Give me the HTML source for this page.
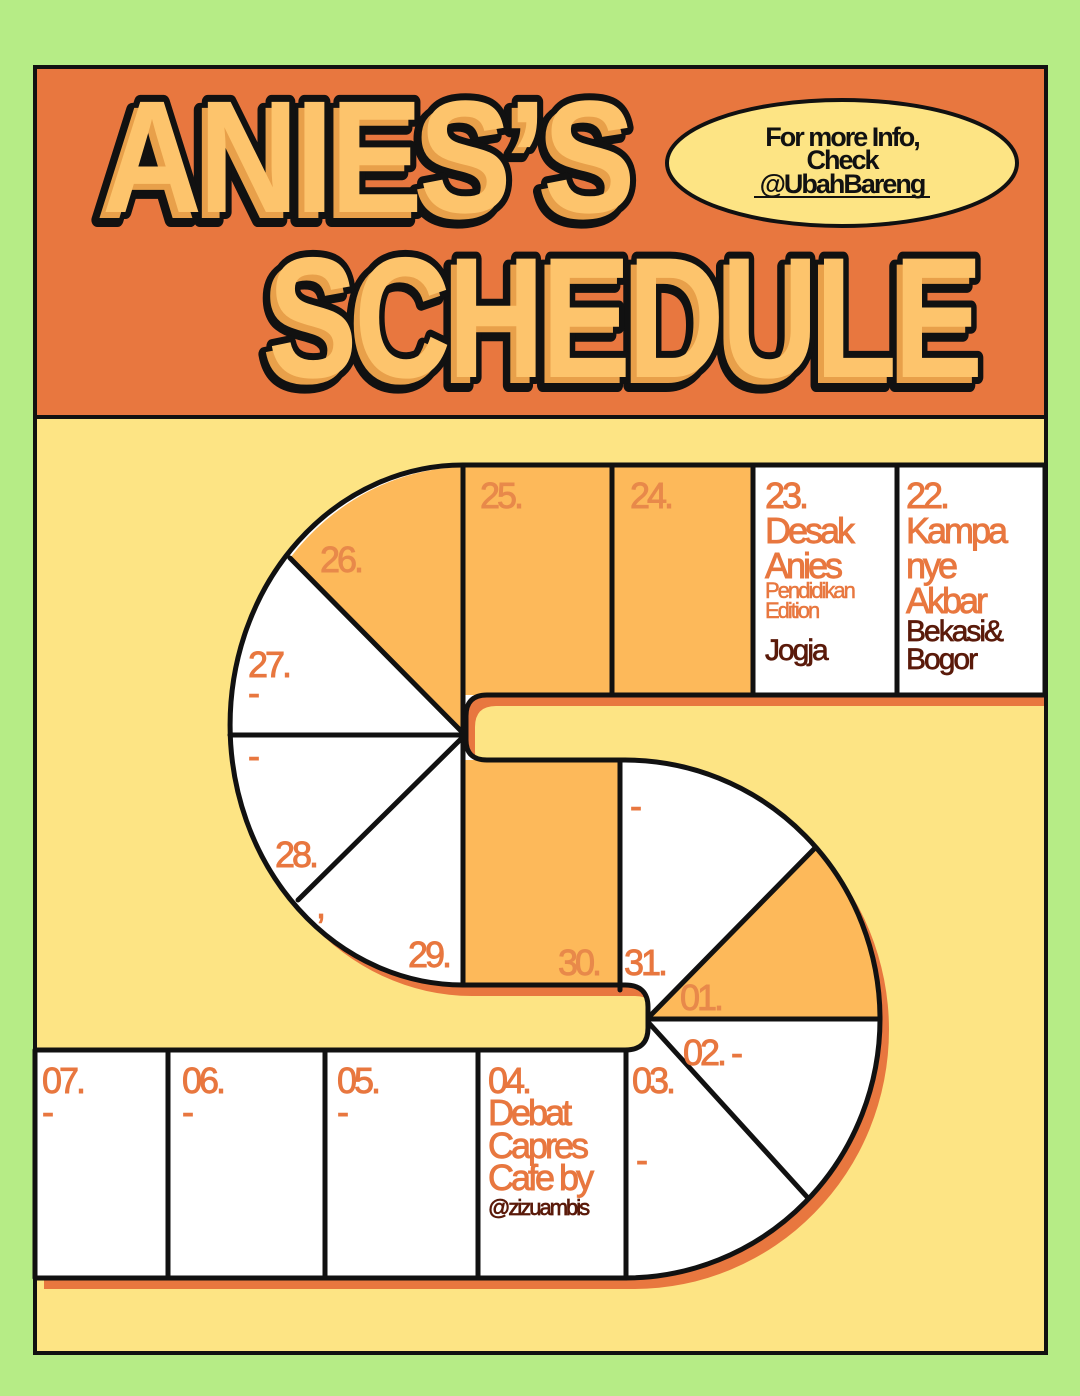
<!DOCTYPE html>
<html><head><meta charset="utf-8"><style>
html,body{margin:0;padding:0;background:#b6ec86;}
svg{display:block}
text{font-family:"Liberation Sans",sans-serif;}
</style></head><body>
<svg width="1080" height="1396" viewBox="0 0 1080 1396" xmlns="http://www.w3.org/2000/svg">
<defs>
<clipPath id="fr"><rect x="37" y="419" width="1007" height="932"/></clipPath>
<path id="S" d="M1045,465 L463,465 A233,260 0 0 0 463,985 L625,985 Q648,985 648,1007 L648,1028 Q648,1050 625,1050 L35,1050 L35,1278 L625,1278 A255,259 0 0 0 625,760 L487,760 Q466,760 466,740 L466,716 Q466,695 487,695 L1045,695 Z"/>
</defs>
<rect x="0" y="0" width="1080" height="1396" fill="#b6ec86"/>
<rect x="35" y="67" width="1011" height="1286" fill="#fde484" stroke="#111" stroke-width="4"/>
<rect x="37" y="69" width="1007" height="347" fill="#e8773f"/>
<line x1="35" y1="417" x2="1046" y2="417" stroke="#111" stroke-width="4"/>

<!-- Title -->
<g font-weight="bold" font-size="160" letter-spacing="-4">
<text x="102" y="212" textLength="530" lengthAdjust="spacingAndGlyphs" fill="#111" stroke="#111" stroke-width="14" stroke-linejoin="round" transform="translate(-8,8)">ANIES’S</text>
<text x="102" y="212" textLength="530" lengthAdjust="spacingAndGlyphs" fill="#111" stroke="#111" stroke-width="14" stroke-linejoin="round">ANIES’S</text>
<text x="102" y="212" textLength="530" lengthAdjust="spacingAndGlyphs" fill="#e8a04a" transform="translate(-6,6)">ANIES’S</text>
<text x="102" y="212" textLength="530" lengthAdjust="spacingAndGlyphs" fill="#fdc46c">ANIES’S</text>
</g>
<g font-weight="bold" font-size="172" letter-spacing="-4">
<text x="268" y="377" textLength="712" lengthAdjust="spacingAndGlyphs" fill="#111" stroke="#111" stroke-width="14" stroke-linejoin="round" transform="translate(-8,8)">SCHEDULE</text>
<text x="268" y="377" textLength="712" lengthAdjust="spacingAndGlyphs" fill="#111" stroke="#111" stroke-width="14" stroke-linejoin="round">SCHEDULE</text>
<text x="268" y="377" textLength="712" lengthAdjust="spacingAndGlyphs" fill="#e8a04a" transform="translate(-6,6)">SCHEDULE</text>
<text x="268" y="377" textLength="712" lengthAdjust="spacingAndGlyphs" fill="#fdc46c">SCHEDULE</text>
</g>

<ellipse cx="842" cy="163" rx="175" ry="63" fill="#fde484" stroke="#111" stroke-width="4"/>
<g font-size="27" font-weight="bold" fill="#111" text-anchor="middle" letter-spacing="-2">
<text x="842" y="146">For more Info,</text>
<text x="842" y="169">Check</text>
<text x="842" y="193">@UbahBareng</text>
</g>
<line x1="754" y1="197" x2="930" y2="197" stroke="#111" stroke-width="2"/>

<!-- S shape -->
<g clip-path="url(#fr)"><use href="#S" fill="#e8773f" transform="translate(9,11)"/></g>
<use href="#S" fill="#fff"/>
<g fill="#fdb95a">
<rect x="463" y="465" width="290" height="230"/>
<path d="M463,467 A233,260 0 0 0 290,558 L465,735 Z"/>
<rect x="463" y="760" width="157" height="225"/>
<path d="M815,848 A255,259 0 0 1 880,1019 L648,1019 Z"/>
</g>
<g stroke="#111" stroke-width="5" fill="none" stroke-linecap="round">
<line x1="612" y1="465" x2="612" y2="695"/>
<line x1="753" y1="465" x2="753" y2="695"/>
<line x1="897" y1="465" x2="897" y2="695"/>
<line x1="463" y1="465" x2="463" y2="985"/>
<line x1="620" y1="760" x2="620" y2="990"/>
<line x1="465" y1="735" x2="290" y2="558"/>
<line x1="465" y1="735" x2="230" y2="735"/>
<line x1="465" y1="735" x2="298" y2="900"/>
<line x1="648" y1="1018" x2="815" y2="848"/>
<line x1="648" y1="1019" x2="880" y2="1019"/>
<line x1="648" y1="1022" x2="808" y2="1198"/>
<line x1="168" y1="1050" x2="168" y2="1278"/>
<line x1="325" y1="1050" x2="325" y2="1278"/>
<line x1="478" y1="1050" x2="478" y2="1278"/>
<line x1="626" y1="1050" x2="626" y2="1278"/>
<use href="#S" stroke-linejoin="round"/>
</g>

<!-- labels -->
<g font-size="36" fill="#e8773f" stroke="#e8773f" stroke-width="0.9" letter-spacing="-3">
<text x="480" y="508" fill="#e8894a" stroke="#e8894a">25.</text>
<text x="630" y="508" fill="#e8894a" stroke="#e8894a">24.</text>
<text x="765" y="508">23.</text>
<text x="765" y="543">Desak</text>
<text x="765" y="578">Anies</text>
<text x="906" y="508">22.</text>
<text x="906" y="543">Kampa</text>
<text x="906" y="578">nye</text>
<text x="906" y="613">Akbar</text>
<text x="320" y="572" fill="#e8894a" stroke="#e8894a">26.</text>
<text x="248" y="677">27.</text>
<text x="248" y="705">-</text>
<text x="248" y="768">-</text>
<text x="275" y="867">28.</text>
<text x="316" y="918">,</text>
<text x="408" y="967">29.</text>
<text x="558" y="975" fill="#e8894a" stroke="#e8894a">30.</text>
<text x="624" y="975">31.</text>
<text x="630" y="818">-</text>
<text x="680" y="1010" fill="#e8894a" stroke="#e8894a">01.</text>
<text x="683" y="1065">02. -</text>
<text x="632" y="1093">03.</text>
<text x="636" y="1172">-</text>
<text x="42" y="1093">07.</text>
<text x="42" y="1124">-</text>
<text x="182" y="1093">06.</text>
<text x="182" y="1124">-</text>
<text x="337" y="1093">05.</text>
<text x="337" y="1124">-</text>
<text x="488" y="1093">04.</text>
<text x="488" y="1125">Debat</text>
<text x="488" y="1158">Capres</text>
<text x="488" y="1190">Cafe by</text>
</g>
<g font-size="22" fill="#e8773f" stroke="#e8773f" stroke-width="0.5" letter-spacing="-2">
<text x="765" y="598">Pendidikan</text>
<text x="765" y="618">Edition</text>
</g>
<g fill="#5a1a0a" stroke="#5a1a0a" stroke-width="0.7" letter-spacing="-2">
<text x="765" y="660" font-size="30">Jogja</text>
<text x="906" y="641" font-size="30">Bekasi&amp;</text>
<text x="906" y="669" font-size="30">Bogor</text>
<text x="488" y="1215" font-size="22">@zizuambis</text>
</g>
</svg>
</body></html>
